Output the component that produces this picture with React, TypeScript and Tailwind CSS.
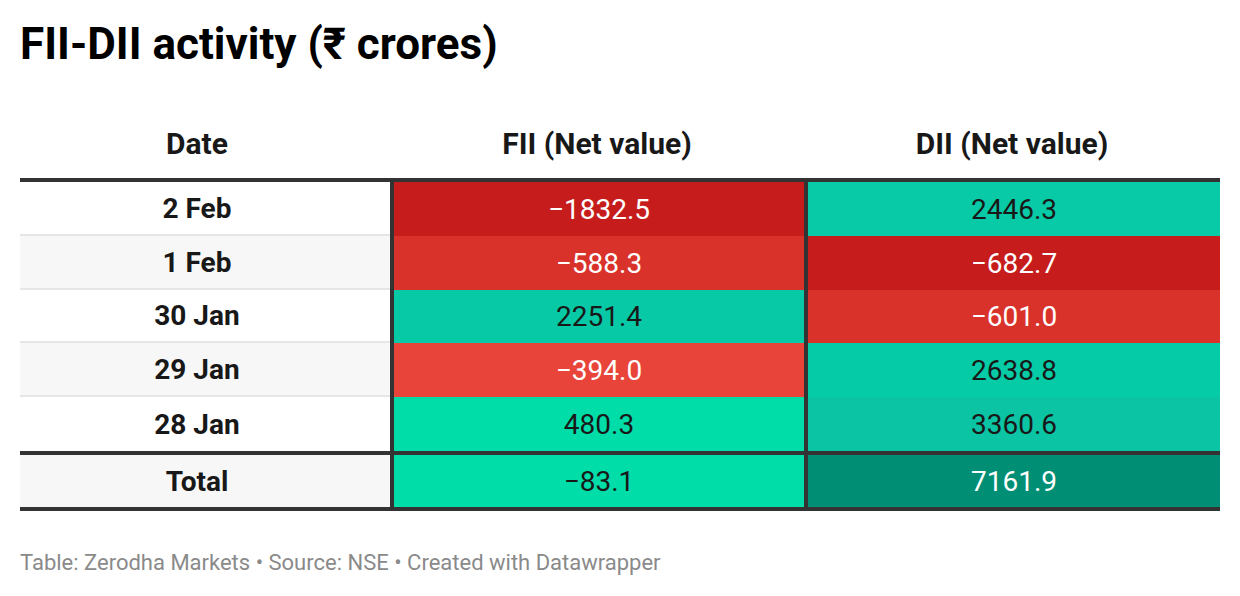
import React from "react";

type Cell = { v: string; bg: string; light: boolean };
const rows: { d: string; fii: Cell; dii: Cell; alt: boolean }[] = [
  { d: "2 Feb", fii: { v: "−1832.5", bg: "bg-[#c61c1c]", light: true }, dii: { v: "2446.3", bg: "bg-[#09caa6]", light: false }, alt: false },
  { d: "1 Feb", fii: { v: "−588.3", bg: "bg-[#d9322a]", light: true }, dii: { v: "−682.7", bg: "bg-[#c61c1c]", light: true }, alt: true },
  { d: "30 Jan", fii: { v: "2251.4", bg: "bg-[#08c9a6]", light: false }, dii: { v: "−601.0", bg: "bg-[#d9322a]", light: true }, alt: false },
  { d: "29 Jan", fii: { v: "−394.0", bg: "bg-[#e8443a]", light: true }, dii: { v: "2638.8", bg: "bg-[#05cca6]", light: false }, alt: true },
  { d: "28 Jan", fii: { v: "480.3", bg: "bg-[#00dda9]", light: false }, dii: { v: "3360.6", bg: "bg-[#0bc4a4]", light: false }, alt: false },
];

function ValueCell({ c }: { c: Cell }) {
  return (
    <div className={`${c.bg} flex items-center justify-center pt-[2px] text-[28px] ${c.light ? "text-white" : "text-[#181818]"}`}>
      {c.v}
    </div>
  );
}

export default function App() {
  return (
    <div className="w-[1240px] h-[596px] bg-white px-5 text-[#181818]" style={{ fontFamily: "Roboto, 'Liberation Sans', sans-serif" }}>
      <h1 className="pt-[18px] text-[44px] font-bold leading-[52px] text-black">FII-DII activity (₹ crores)</h1>
      <div className="mt-[38px]">
        <div className="grid grid-cols-[370px_414px_416px] h-[70px] items-center text-[30px] font-bold">
          <div className="text-center pr-4">Date</div>
          <div className="text-center">FII (Net value)</div>
          <div className="text-center">DII (Net value)</div>
        </div>
        <div className="border-t-4 border-b-4 border-[#333]">
          {rows.map((r, i) => (
            <div key={r.d} className="grid grid-cols-[370px_4px_410px_4px_412px] h-[53.8px]">
              <div className={`${r.alt ? "bg-[#f7f7f7]" : "bg-white"} ${i < rows.length - 1 ? "border-b-2 border-[#e6e6e6]" : ""} flex items-center justify-center pr-4 pt-[2px] text-[28px] font-bold`}>{r.d}</div>
              <div className="bg-[#333]" />
              <ValueCell c={r.fii} />
              <div className="bg-[#333]" />
              <ValueCell c={r.dii} />
            </div>
          ))}
          <div className="grid grid-cols-[370px_4px_410px_4px_412px] h-[56px] border-t-4 border-[#333]">
            <div className="bg-[#f7f7f7] flex items-center justify-center pr-4 pt-[2px] text-[28px] font-bold">Total</div>
            <div className="bg-[#333]" />
            <ValueCell c={{ v: "−83.1", bg: "bg-[#00dda9]", light: false }} />
            <div className="bg-[#333]" />
            <ValueCell c={{ v: "7161.9", bg: "bg-[#008f74]", light: true }} />
          </div>
        </div>
      </div>
      <div className="mt-[37px] text-[22px] leading-[30px] text-[#8a8a8a]">Table: Zerodha Markets • Source: NSE • Created with Datawrapper</div>
    </div>
  );
}
